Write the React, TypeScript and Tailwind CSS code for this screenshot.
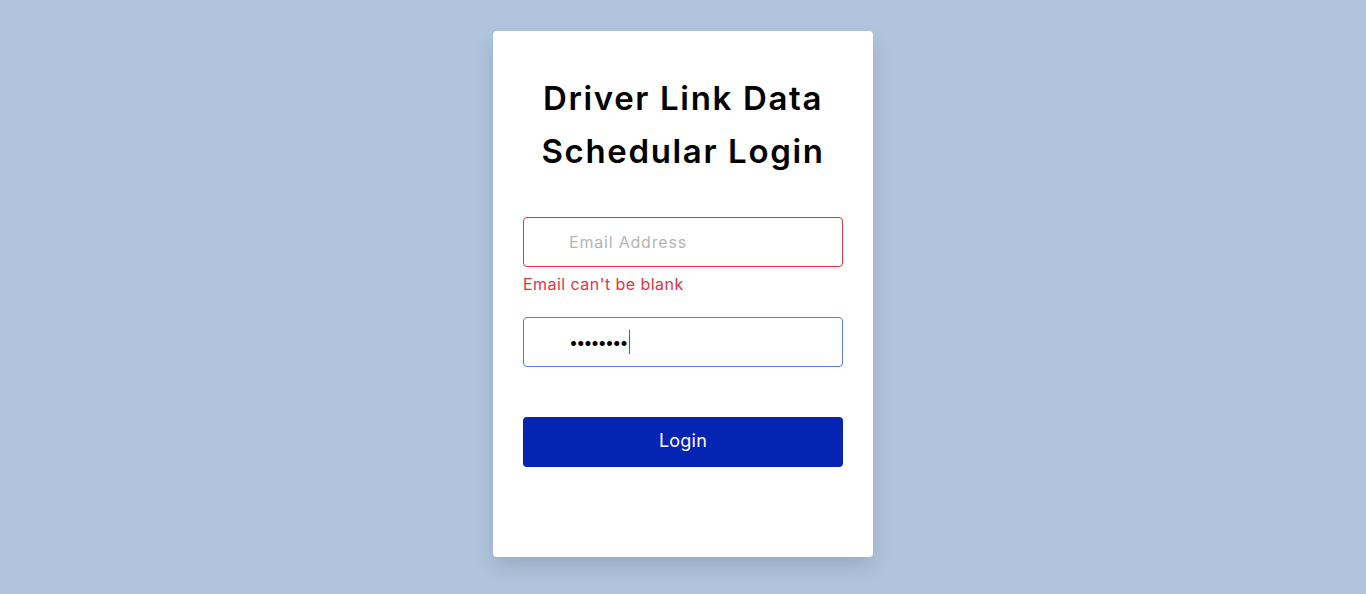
import React from "react";

export default function App() {
  return (
    <div
      className="min-h-[594px] w-full bg-[#b0c4de] flex justify-center pt-[31px]"
      style={{ fontFamily: "Inter, 'Noto Sans', sans-serif" }}
    >
      <div className="w-[380px] h-[526px] bg-white rounded-[4px] shadow-[0_10px_20px_rgba(0,0,0,0.12)] px-[30px] pt-[41px] flex flex-col">
        <h1 className="text-center text-[33px] leading-[53px] font-semibold text-black tracking-[1.65px]">
          Driver Link Data
          <br />
          Schedular Login
        </h1>
        <form className="mt-[39px] flex flex-col" onSubmit={(e) => e.preventDefault()}>
          <input
            type="email"
            placeholder="Email Address"
            className="w-[320px] h-[50px] rounded-[4px] border border-[#dc3545] pl-[45px] pr-3 text-[16px] tracking-[0.8px] text-black placeholder:text-[#b5b5b5] outline-none"
          />
          <div className="mt-[5px] text-[16px] leading-[24px] tracking-[0.45px] text-[#dc3545]">Email can't be blank</div>
          <div className="mt-[21px] relative w-[320px] h-[50px] rounded-[4px] border border-[#587ae8] flex items-center pl-[45px]">
            <span className="text-[16px] leading-none tracking-[-1.8px] text-black">••••••••</span>
            <span className="ml-[2px] w-px h-[24px] bg-[#2f5be0]" />
          </div>
          <button
            type="submit"
            className="mt-[50px] w-[320px] h-[50px] rounded-[4px] bg-[#0524b3] text-white text-[18px] tracking-[0.2px] pb-[3px]"
          >
            Login
          </button>
        </form>
      </div>
    </div>
  );
}
